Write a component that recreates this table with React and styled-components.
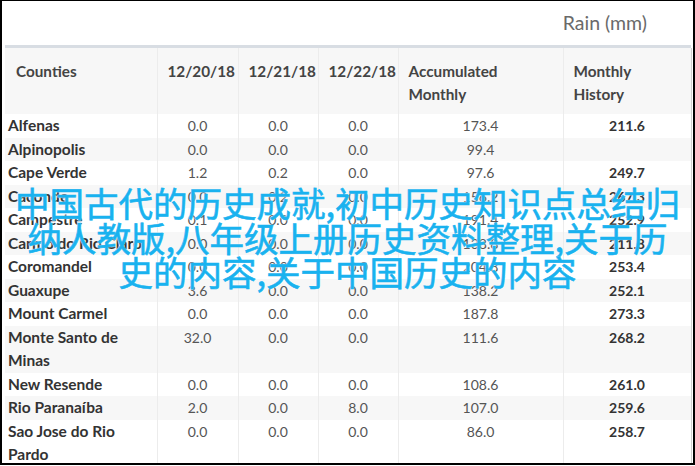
import React from "react";
import styled, { createGlobalStyle } from "styled-components";

const GlobalStyle = createGlobalStyle`
  html, body {
    margin: 0;
    padding: 0;
    background: #fff;
  }
  body {
    font-family: Lato, "Liberation Sans", sans-serif;
  }
`;

const Frame = styled.div`
  position: relative;
  box-sizing: border-box;
  width: 695px;
  height: 465px;
  border-style: solid;
  border-color: #000;
  border-width: 1px 2px 2px 2px;
  padding: 0 2px 0 3px;
  overflow: hidden;
  background: #fff;
`;

const Caption = styled.div`
  height: 44px;
  line-height: 44px;
  text-align: right;
  padding-right: 44px;
  font-size: 19.5px;
  color: #6a6a6a;
  border-bottom: 3px solid #d8dde3;
`;

const Table = styled.table`
  width: 686px;
  border-collapse: collapse;
  table-layout: fixed;
  border-right: 1px solid #cfcfcf;
`;

const HeadCell = styled.th`
  background: #f7f7f7;
  padding: 12px 10px 8px;
  line-height: 23px;
  font-size: 15.3px;
  font-weight: 700;
  color: #444;
  text-align: left;
  vertical-align: top;
  border-left: 1px solid #ececec;
  &:first-child {
    border-left: none;
    padding-left: 11px;
  }
`;

const Row = styled.tr`
  background: ${(p) => (p.$shade ? "#f7f7f7" : "#fff")};
`;

const NameCell = styled.td`
  padding: 0 3px;
  line-height: 23.5px;
  font-size: 15.5px;
  font-weight: 700;
  color: #333;
  white-space: pre-line;
  vertical-align: top;
`;

const NumCell = styled.td`
  padding: 0;
  line-height: 23.5px;
  font-size: 14px;
  font-weight: ${(p) => (p.$strong ? 700 : 400)};
  color: ${(p) => (p.$strong ? "#333" : "#555")};
  text-align: center;
  vertical-align: top;
  border-left: 1px solid #ececec;
`;

const Overlay = styled.div`
  position: absolute;
  left: 0;
  right: 0;
  top: 184px;
  text-align: center;
  font-family: "Noto Sans CJK SC", "Noto Sans", sans-serif;
  font-size: 34.5px;
  line-height: 34.5px;
  color: #19b2ef;
  white-space: nowrap;
  -webkit-text-stroke: 0.6px #19b2ef;
  text-shadow: 0 0 2px #fff, 0 0 1px #fff;
`;

const rows = [
  ["Alfenas", "0.0", "0.0", "0.0", "173.4", "211.6"],
  ["Alpinopolis", "0.0", "0.0", "0.0", "99.4", ""],
  ["Cape Verde", "1.2", "0.2", "0.0", "97.6", "249.7"],
  ["Caconde", "0.0", "0.2", "0.0", "156.2", "267.3"],
  ["Campestre", "0.1", "0.0", "0.0", "191.4", "252.9"],
  ["Carmo do Rio Claro", "0.0", "0.0", "0.0", "138.8", "211.8"],
  ["Coromandel", "0.0", "0.0", "0.0", "204.8", "253.4"],
  ["Guaxupe", "3.6", "0.0", "0.0", "138.2", "252.1"],
  ["Mount Carmel", "0.0", "0.0", "0.0", "187.8", "273.3"],
  ["Monte Santo de\nMinas", "32.0", "0.0", "0.0", "111.6", "268.2"],
  ["New Resende", "0.0", "0.0", "0.0", "108.6", "261.0"],
  ["Rio Paranaíba", "2.0", "0.0", "8.0", "107.0", "259.6"],
  ["Sao Jose do Rio\nPardo", "0.0", "0.0", "0.0", "86.0", "258.7"],
];

const widths = [152, 81, 80, 80, 165, 128];

export default function App() {
  return (
    <>
      <GlobalStyle />
      <Frame>
        <Caption>Rain (mm)</Caption>
        <Table>
          <colgroup>
            {widths.map((w, i) => (
              <col key={i} style={{ width: w }} />
            ))}
          </colgroup>
          <thead>
            <tr>
              <HeadCell>Counties</HeadCell>
              <HeadCell>12/20/18</HeadCell>
              <HeadCell>12/21/18</HeadCell>
              <HeadCell>12/22/18</HeadCell>
              <HeadCell>
                Accumulated
                <br />
                Monthly
              </HeadCell>
              <HeadCell>
                Monthly
                <br />
                History
              </HeadCell>
            </tr>
          </thead>
          <tbody>
            {rows.map((r, i) => (
              <Row key={r[0]} $shade={i % 2 === 1}>
                <NameCell>{r[0]}</NameCell>
                <NumCell>{r[1]}</NumCell>
                <NumCell>{r[2]}</NumCell>
                <NumCell>{r[3]}</NumCell>
                <NumCell>{r[4]}</NumCell>
                <NumCell $strong>{r[5]}</NumCell>
              </Row>
            ))}
          </tbody>
        </Table>
        <Overlay>
          中国古代的历史成就,初中历史知识点总结归
          <br />
          纳人教版,八年级上册历史资料整理,关于历
          <br />
          史的内容,关于中国历史的内容
        </Overlay>
      </Frame>
    </>
  );
}
